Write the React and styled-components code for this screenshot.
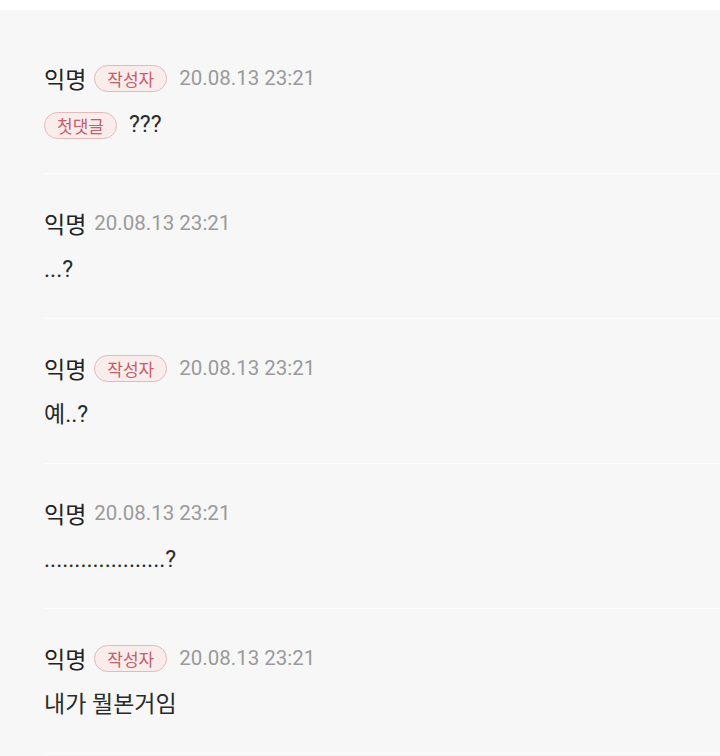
import React from 'react'
import styled, { createGlobalStyle } from 'styled-components'

const GlobalStyle = createGlobalStyle`
  html, body {
    margin: 0;
    padding: 0;
    background: #ffffff;
  }
  body {
    font-family: Roboto, "Noto Sans CJK KR", "Noto Sans", sans-serif;
  }
`

const comments = [
  { author: true, first: true, text: '???' },
  { author: false, text: '...?' },
  { author: true, text: '예..?' },
  { author: false, text: '....................?' },
  { author: true, text: '내가 뭘본거임' },
]

const App = () => {
  return (
    <>
      <GlobalStyle />
      <Page>
        <List>
          {comments.map((c, i) => (
            <Item key={i}>
              <Header>
                <Name>익명</Name>
                {c.author && <Badge>작성자</Badge>}
                <Date>20.08.13 23:21</Date>
              </Header>
              <Body>
                {c.first && <Badge $first>첫댓글</Badge>}
                <Text>{c.text}</Text>
              </Body>
            </Item>
          ))}
        </List>
      </Page>
    </>
  )
}

export default App

const Page = styled.div`
  width: 720px;
  height: 756px;
  padding-top: 10px;
  box-sizing: border-box;
  overflow: hidden;
  background: #ffffff;
`

const List = styled.div`
  background: #f7f7f7;
  height: 100%;
  padding-top: 19px;
  box-sizing: border-box;
`

const Item = styled.div`
  margin-left: 44px;
  padding: 34px 0 33px 0;
  border-bottom: 1px solid #fdfdfd;
`

const Header = styled.div`
  display: flex;
  align-items: center;
  height: 30px;
`

const Name = styled.span`
  font-family: "Noto Sans CJK KR", sans-serif;
  font-size: 23px;
  color: #222222;
  line-height: 30px;
  margin-right: 8px;
`

const Badge = styled.span`
  display: inline-flex;
  align-items: center;
  justify-content: center;
  height: 27px;
  padding: 0 12px;
  border: 1.5px solid #e2baba;
  border-radius: 14px;
  background: #fbecec;
  color: #c0606a;
  font-family: "Noto Sans CJK KR", sans-serif;
  font-size: 17px;
  margin-right: 12px;
  box-sizing: border-box;
`

const Date = styled.span`
  font-family: Roboto, sans-serif;
  font-size: 20.5px;
  color: #9a9a9a;
  line-height: 30px;
`

const Body = styled.div`
  display: flex;
  align-items: center;
  height: 30px;
  margin-top: 17px;
`

const Text = styled.span`
  font-family: Roboto, "Noto Sans CJK KR", sans-serif;
  font-size: 23px;
  color: #2a2a2a;
  line-height: 30px;
`
